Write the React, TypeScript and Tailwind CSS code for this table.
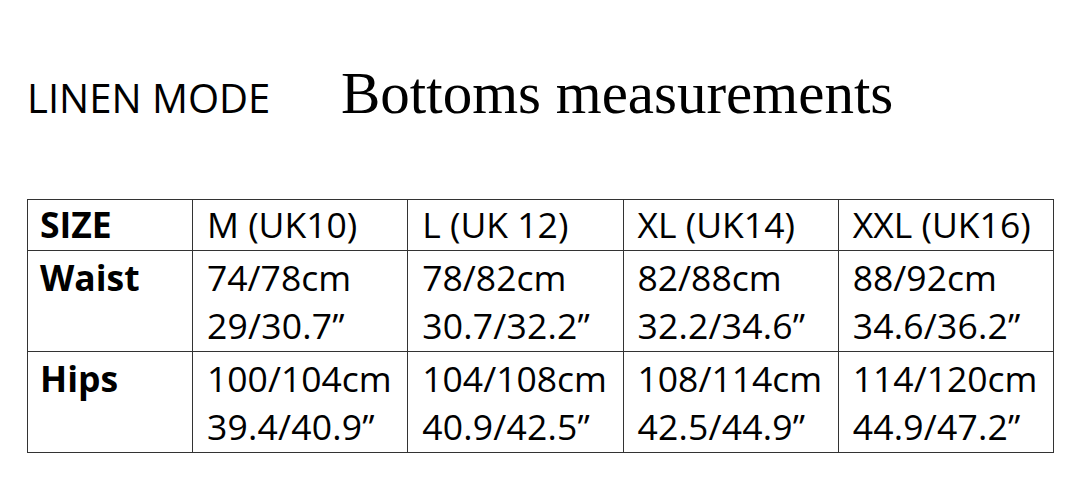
// Linen Mode – bottoms size chart
type Row = {
  label: string;
  values: string[][];
};

const sizes = ["M (UK10)", "L (UK 12)", "XL (UK14)", "XXL (UK16)"];

const rows: Row[] = [
  {
    label: "Waist",
    values: [
      ["74/78cm", "29/30.7\u2019\u2019"],
      ["78/82cm", "30.7/32.2\u2019\u2019"],
      ["82/88cm", "32.2/34.6\u2019\u2019"],
      ["88/92cm", "34.6/36.2\u2019\u2019"],
    ],
  },
  {
    label: "Hips",
    values: [
      ["100/104cm", "39.4/40.9\u2019\u2019"],
      ["104/108cm", "40.9/42.5\u2019\u2019"],
      ["108/114cm", "42.5/44.9\u2019\u2019"],
      ["114/120cm", "44.9/47.2\u2019\u2019"],
    ],
  },
];

export default function App() {
  return (
    <div className="w-[1073px] h-[494px] bg-white text-black overflow-hidden">
      {/* ── heading ─────────────────────────────────────────── */}
      <div className="flex items-baseline pt-[64px] pl-[27px]">
        <span className="w-[314px] font-['Open_Sans',sans-serif] text-[40px] leading-none">
          LINEN MODE
        </span>
        <span className="font-['Liberation_Serif',serif] text-[59px] leading-none">
          Bottoms measurements
        </span>
      </div>

      {/* ── size table ──────────────────────────────────────── */}
      <div className="pl-[27px] mt-[76px]">
        <table className="w-[1027px] border-collapse table-fixed font-['Open_Sans',sans-serif] text-[35.5px] leading-[48px]">
          <colgroup>
            <col className="w-[165px]" />
            <col />
            <col />
            <col />
            <col />
          </colgroup>
          <tbody>
            <tr className="h-[51px]">
              <td className="border border-[#333] align-top pl-[12px] pt-0 font-bold">
                SIZE
              </td>
              {sizes.map((s) => (
                <td
                  key={s}
                  className="border border-[#333] align-top pl-[14px] pt-0 whitespace-nowrap"
                >
                  {s}
                </td>
              ))}
            </tr>
            {rows.map((r) => (
              <tr key={r.label} className="h-[101px]">
                <td className="border border-[#333] align-top pl-[12px] pt-[2px] font-bold">
                  {r.label}
                </td>
                {r.values.map((v) => (
                  <td
                    key={v[0]}
                    className="border border-[#333] align-top pl-[14px] pt-[2px] whitespace-nowrap"
                  >
                    <div>{v[0]}</div>
                    <div className="tracking-[0.2px]">{v[1]}</div>
                  </td>
                ))}
              </tr>
            ))}
          </tbody>
        </table>
      </div>
    </div>
  );
}
